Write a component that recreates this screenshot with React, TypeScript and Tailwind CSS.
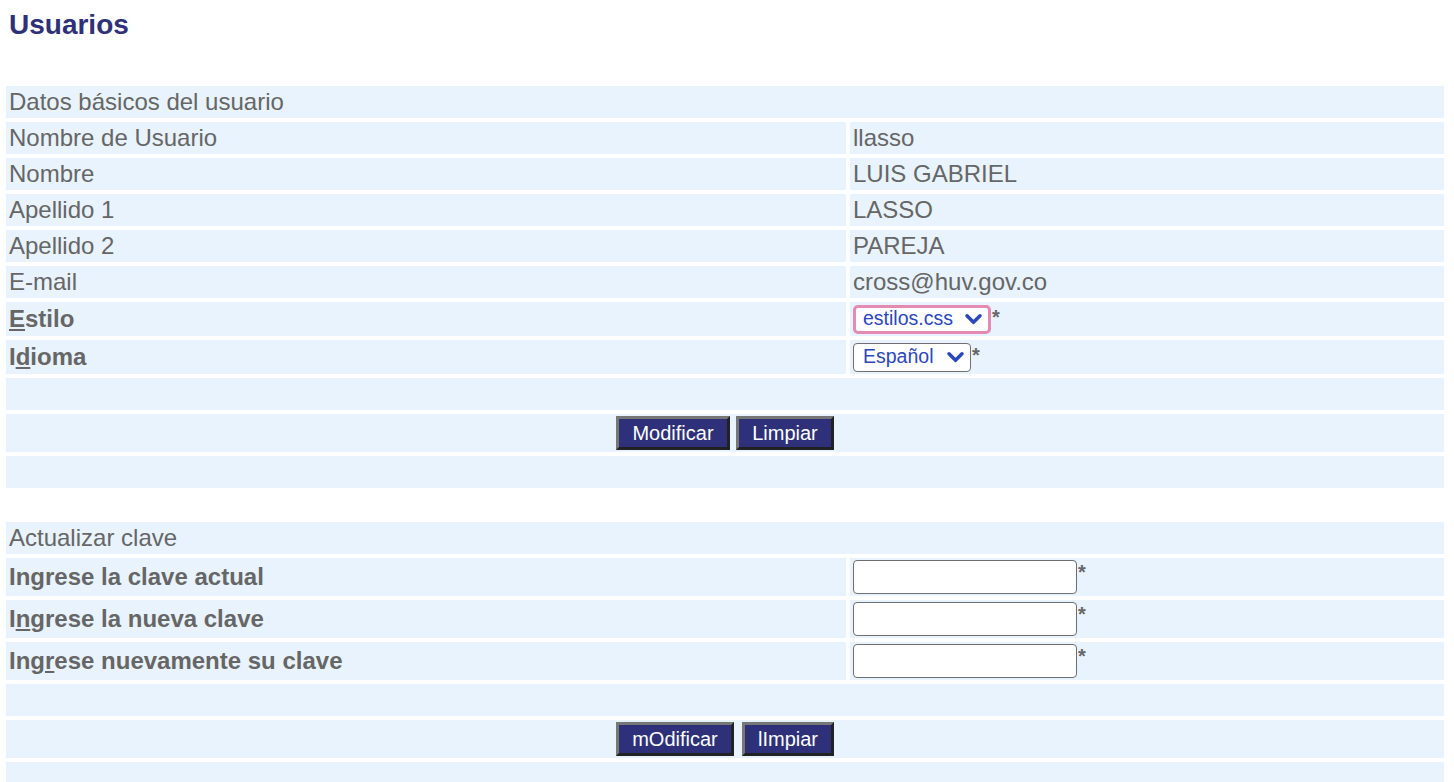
import React from 'react';

const font = { fontFamily: '"Liberation Sans", Arial, Helvetica, sans-serif' };

function Chevron() {
  return (
    <svg viewBox="0 0 20 14" className="h-[13px] w-[19px]" fill="none">
      <polyline points="3,3 10,10 17,3" stroke="#2b47bd" strokeWidth="3.8" strokeLinecap="round" strokeLinejoin="round" />
    </svg>
  );
}

function Star() {
  return <span className="ml-[1px] self-start pt-[2px] text-[20px] font-bold leading-none text-[#666]">*</span>;
}

function FakeSelect({ value, focused, width }: { value: string; focused?: boolean; width: string }) {
  return (
    <div className="flex items-start">
      <div
        className={
          focused
            ? 'flex h-[29px] items-center justify-between rounded-[5px] border-[3px] border-[#e48ab3] bg-white pl-[7px] pr-[5px] ' + width
            : 'flex h-[29px] items-center justify-between rounded-[4px] border-[1.5px] border-[#6f6f6f] bg-white pl-[9px] pr-[5px] ' + width
        }
      >
        <span className="text-[19.5px] leading-none text-[#2b47bd]">{value}</span>
        <Chevron />
      </div>
      <Star />
    </div>
  );
}

function Field() {
  return (
    <div className="flex items-start">
      <div className="h-[34px] w-[224px] rounded-[4px] border-[1.5px] border-[#6f6f6f] bg-white" />
      <Star />
    </div>
  );
}

function Btn({ label, w }: { label: string; w: string }) {
  return (
    <button
      className={
        'h-[34px] border-[3px] border-t-[#777] border-l-[#777] border-b-[#222] border-r-[#222] bg-[#2e3179] text-[20px] leading-none text-white ' +
        w
      }
    >
      {label}
    </button>
  );
}

const cell = 'flex items-center bg-[#e8f3fd] px-[3px] text-[24px] text-[#666]';

function Row({ label, value, h = 'h-[32px]' }: { label: React.ReactNode; value: React.ReactNode; h?: string }) {
  return (
    <>
      <div className={cell + ' ' + h}>{label}</div>
      <div className={cell + ' ' + h}>{value}</div>
    </>
  );
}

function Full({ children, h = 'h-[32px]', gap = '' }: { children?: React.ReactNode; h?: string; gap?: string }) {
  return <div className={cell + ' col-span-2 ' + h + (gap ? ' justify-center ' + gap : '')}>{children}</div>;
}

export default function App() {
  return (
    <div className="min-h-screen bg-white pl-[6px] pr-[10px]" style={font}>
      <h1 className="pl-[3px] pt-[9px] text-[28px] font-bold leading-[32px] text-[#2e3178]">Usuarios</h1>

      <div className="mt-[45px] grid grid-cols-[840px_1fr] gap-[4px]">
        <Full>Datos básicos del usuario</Full>
        <Row label="Nombre de Usuario" value="llasso" />
        <Row label="Nombre" value="LUIS GABRIEL" />
        <Row label="Apellido 1" value="LASSO" />
        <Row label="Apellido 2" value="PAREJA" />
        <Row label="E-mail" value="cross@huv.gov.co" />
        <Row
          h="h-[34px]"
          label={
            <b>
              <u>E</u>stilo
            </b>
          }
          value={<FakeSelect value="estilos.css" focused width="w-[138px]" />}
        />
        <Row
          h="h-[34px]"
          label={
            <b>
              I<u>d</u>ioma
            </b>
          }
          value={<FakeSelect value="Español" width="w-[118px]" />}
        />
        <Full />
        <Full h="h-[38px]" gap="gap-[6px]">
          <Btn label="Modificar" w="w-[114px]" />
          <Btn label="Limpiar" w="w-[98px]" />
        </Full>
        <Full />
      </div>

      <div className="mt-[34px] grid grid-cols-[840px_1fr] gap-[4px]">
        <Full>Actualizar clave</Full>
        <Row h="h-[38px]" label={<b>Ingrese la clave actual</b>} value={<Field />} />
        <Row
          h="h-[38px]"
          label={
            <b>
              I<u>n</u>grese la nueva clave
            </b>
          }
          value={<Field />}
        />
        <Row
          h="h-[38px]"
          label={
            <b>
              Ing<u>r</u>ese nuevamente su clave
            </b>
          }
          value={<Field />}
        />
        <Full />
        <Full h="h-[38px]" gap="gap-[8px]">
          <Btn label="mOdificar" w="w-[118px]" />
          <Btn label="lImpiar" w="w-[92px]" />
        </Full>
        <Full />
      </div>
    </div>
  );
}
